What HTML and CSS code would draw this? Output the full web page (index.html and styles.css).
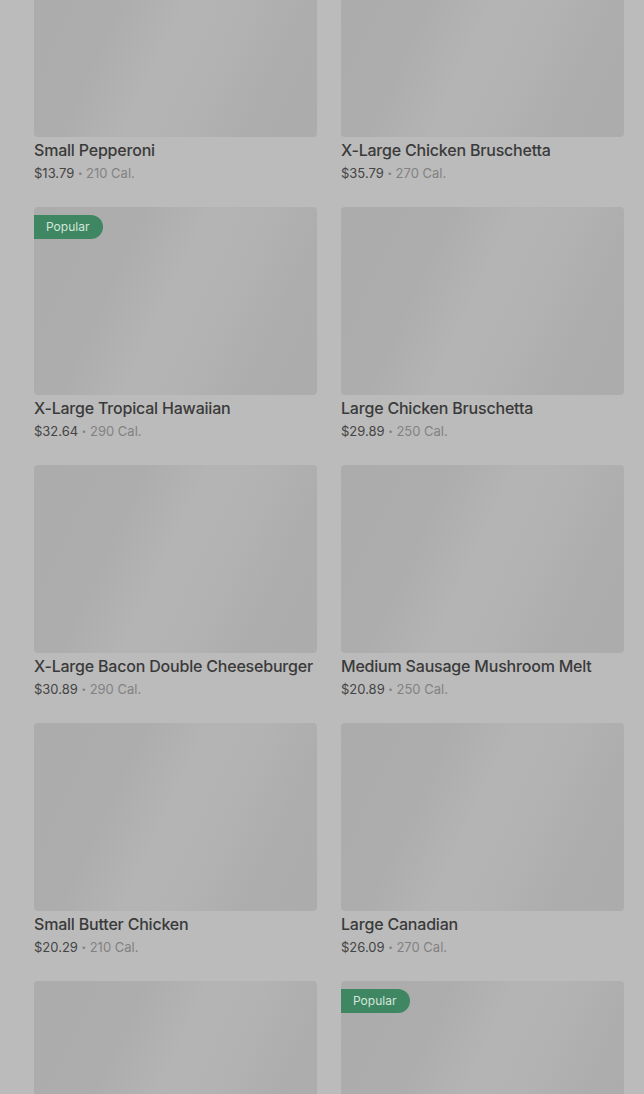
FILE: index.html
```html
<!DOCTYPE html>
<html lang="en">
<head>
    <meta charset="UTF-8">
    <meta name="viewport" content="width=device-width, initial-scale=1.0">
    <title>Menu</title>
    <link rel="stylesheet" href="styles.css">
</head>
<body>
    <div class="grid">
        <div class="item">
            <div class="thumb"></div>
            <div class="name">Small Pepperoni</div>
            <div class="meta"><span class="price">$13.79</span> <span class="dot">•</span> 210 Cal.</div>
        </div>
        <div class="item">
            <div class="thumb"></div>
            <div class="name">X-Large Chicken Bruschetta</div>
            <div class="meta"><span class="price">$35.79</span> <span class="dot">•</span> 270 Cal.</div>
        </div>
        <div class="item">
            <div class="thumb"><span class="badge">Popular</span></div>
            <div class="name">X-Large Tropical Hawaiian</div>
            <div class="meta"><span class="price">$32.64</span> <span class="dot">•</span> 290 Cal.</div>
        </div>
        <div class="item">
            <div class="thumb"></div>
            <div class="name">Large Chicken Bruschetta</div>
            <div class="meta"><span class="price">$29.89</span> <span class="dot">•</span> 250 Cal.</div>
        </div>
        <div class="item">
            <div class="thumb"></div>
            <div class="name">X-Large Bacon Double Cheeseburger</div>
            <div class="meta"><span class="price">$30.89</span> <span class="dot">•</span> 290 Cal.</div>
        </div>
        <div class="item">
            <div class="thumb"></div>
            <div class="name">Medium Sausage Mushroom Melt</div>
            <div class="meta"><span class="price">$20.89</span> <span class="dot">•</span> 250 Cal.</div>
        </div>
        <div class="item">
            <div class="thumb"></div>
            <div class="name">Small Butter Chicken</div>
            <div class="meta"><span class="price">$20.29</span> <span class="dot">•</span> 210 Cal.</div>
        </div>
        <div class="item">
            <div class="thumb"></div>
            <div class="name">Large Canadian</div>
            <div class="meta"><span class="price">$26.09</span> <span class="dot">•</span> 270 Cal.</div>
        </div>
        <div class="item">
            <div class="thumb"></div>
        </div>
        <div class="item">
            <div class="thumb"><span class="badge">Popular</span></div>
        </div>
    </div>
</body>
</html>
```

FILE: styles.css
```css
body {
    margin: 0;
    background: #bbbbbb;
    font-family: Inter, "Noto Sans", sans-serif;
    overflow: hidden;
    height: 1094px;
}
.grid {
    display: grid;
    grid-template-columns: 283px 283px;
    column-gap: 24px;
    row-gap: 24px;
    padding-left: 34px;
    margin-top: -51px;
}
.item {
    display: flex;
    flex-direction: column;
}
.thumb {
    position: relative;
    height: 188px;
    border-radius: 4px;
    background: linear-gradient(115deg, #acacac 0%, #adadad 30%, #b4b4b4 48%, #b3b3b3 62%, #adadad 80%, #acacac 100%);
}
.badge {
    position: absolute;
    top: 8px;
    left: 0;
    height: 24px;
    line-height: 24px;
    padding: 0 14px 0 12px;
    background: #3f8762;
    color: #d6e6dc;
    font-size: 12px;
    border-radius: 0 12px 12px 0;
}
.name {
    margin-top: 1px;
    font-size: 16px;
    line-height: 24px;
    font-weight: 500;
    letter-spacing: -0.2px;
    color: #3a3a3a;
    white-space: nowrap;
}
.meta {
    margin-top: 1px;
    font-size: 13px;
    line-height: 20px;
    color: #828282;
}
.price {
    color: #444444;
}
.dot {
    font-size: 8px;
    vertical-align: 2px;
}
```
